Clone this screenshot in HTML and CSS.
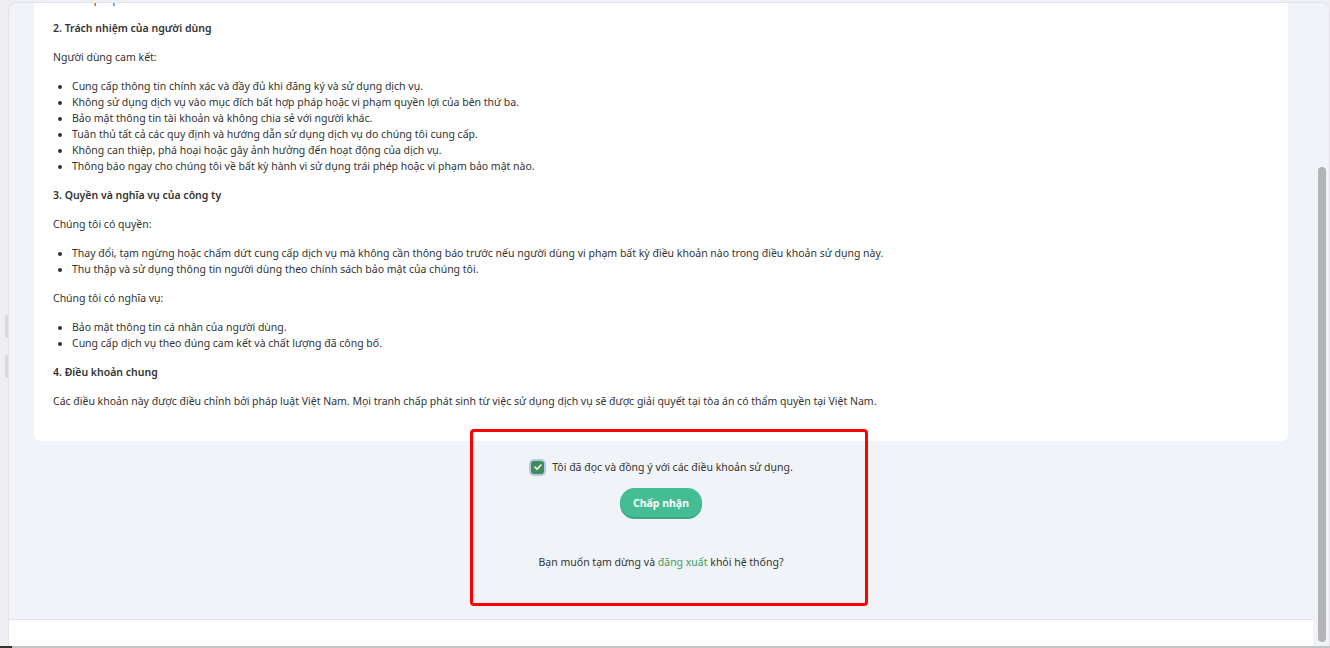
FILE: index.html
```html
<!DOCTYPE html>
<html lang="vi">
<head>
<meta charset="utf-8">
<title>Điều khoản sử dụng</title>
<link rel="stylesheet" href="styles.css">
</head>
<body>
<div class="frame">
  <div class="gutter">
    <span class="handle"></span>
    <span class="handle"></span>
  </div>
  <div class="panel">
    <div class="main">
      <div class="viewport">
        <article class="card">
          <ul class="list">
            <li>Giải pháp thanh toán</li>
          </ul>
          <h3 class="heading">2. Trách nhiệm của người dùng</h3>
          <p class="para">Người dùng cam kết:</p>
          <ul class="list">
            <li>Cung cấp thông tin chính xác và đầy đủ khi đăng ký và sử dụng dịch vụ.</li>
            <li>Không sử dụng dịch vụ vào mục đích bất hợp pháp hoặc vi phạm quyền lợi của bên thứ ba.</li>
            <li>Bảo mật thông tin tài khoản và không chia sẻ với người khác.</li>
            <li>Tuân thủ tất cả các quy định và hướng dẫn sử dụng dịch vụ do chúng tôi cung cấp.</li>
            <li>Không can thiệp, phá hoại hoặc gây ảnh hưởng đến hoạt động của dịch vụ.</li>
            <li>Thông báo ngay cho chúng tôi về bất kỳ hành vi sử dụng trái phép hoặc vi phạm bảo mật nào.</li>
          </ul>
          <h3 class="heading">3. Quyền và nghĩa vụ của công ty</h3>
          <p class="para">Chúng tôi có quyền:</p>
          <ul class="list">
            <li>Thay đổi, tạm ngừng hoặc chấm dứt cung cấp dịch vụ mà không cần thông báo trước nếu người dùng vi phạm bất kỳ điều khoản nào trong điều khoản sử dụng này.</li>
            <li>Thu thập và sử dụng thông tin người dùng theo chính sách bảo mật của chúng tôi.</li>
          </ul>
          <p class="para">Chúng tôi có nghĩa vụ:</p>
          <ul class="list">
            <li>Bảo mật thông tin cá nhân của người dùng.</li>
            <li>Cung cấp dịch vụ theo đúng cam kết và chất lượng đã công bố.</li>
          </ul>
          <h3 class="heading">4. Điều khoản chung</h3>
          <p class="para">Các điều khoản này được điều chỉnh bởi pháp luật Việt Nam. Mọi tranh chấp phát sinh từ việc sử dụng dịch vụ sẽ được giải quyết tại tòa án có thẩm quyền tại Việt Nam.</p>
        </article>
        <section class="agree">
          <label class="check-row">
            <span class="checkbox">
              <svg viewBox="0 0 12 12" width="12" height="12" aria-hidden="true"><path d="M3 6.2 L5.1 8.2 L9 4" fill="none" stroke="#ffffff" stroke-width="1.6" stroke-linecap="round" stroke-linejoin="round"/></svg>
            </span>
            <span class="check-text">Tôi đã đọc và đồng ý với các điều khoản sử dụng.</span>
          </label>
          <button class="accept" type="button">Chấp nhận</button>
          <p class="logout">Bạn muốn tạm dừng và <a class="logout-link" href="#">đăng xuất</a> khỏi hệ thống?</p>
        </section>
      </div>
      <footer class="footer"></footer>
    </div>
    <div class="scrollbar"><span class="thumb"></span></div>
  </div>
</div>
<div class="taskbar"></div>
<div class="annotation"></div>
</body>
</html>
```

FILE: styles.css
```css
html, body {
  margin: 0;
  padding: 0;
}
body {
  width: 1330px;
  height: 648px;
  overflow: hidden;
  background: #efeff3;
  font-family: "Noto Sans", "Open Sans", sans-serif;
  font-size: 10.5px;
  color: #333333;
  position: relative;
}
.frame {
  display: flex;
  height: 644px;
  padding-top: 2px;
}
.gutter {
  width: 8px;
  flex: none;
  display: flex;
  flex-direction: column;
  align-items: flex-end;
  gap: 17px;
  padding-top: 313px;
  box-sizing: border-box;
}
.handle {
  display: block;
  width: 3px;
  height: 23px;
  background: #d9d9de;
  border-radius: 2px 0 0 2px;
}
.panel {
  flex: 1;
  display: flex;
  background: #f0f3f8;
  border: 1px solid #e2e2e8;
  border-bottom: none;
  border-radius: 9px 9px 0 0;
  overflow: hidden;
}
.main {
  flex: 1;
  display: flex;
  flex-direction: column;
  min-width: 0;
}
.viewport {
  flex: 1;
  display: flex;
  flex-direction: column;
  padding: 0 27px 0 25px;
  min-height: 0;
}
.card {
  background: #ffffff;
  margin-top: -12px;
  padding: 0 19px 19px;
  border-radius: 0 0 6px 6px;
  line-height: 16px;
}
.card > :first-child {
  margin-top: 0;
}
.heading {
  font-size: 10.5px;
  font-weight: 600;
  margin: 13px 0;
  line-height: 16px;
}
.para {
  margin: 13px 0;
}
.list {
  margin: 13px 0;
  padding-left: 19px;
}
.list li {
  line-height: 16px;
}
.agree {
  display: flex;
  flex-direction: column;
  align-items: center;
  padding-top: 17px;
}
.check-row {
  display: flex;
  align-items: center;
  gap: 6px;
  height: 18px;
}
.checkbox {
  width: 13px;
  height: 13px;
  background: #3f8b5a;
  border-radius: 3px;
  box-shadow: 0 0 0 2px #b3c9e6;
  display: flex;
  align-items: center;
  justify-content: center;
  margin: 0 2px;
}
.check-text {
  line-height: 16px;
}
.accept {
  margin-top: 12px;
  height: 29px;
  padding: 0 13px;
  border: none;
  border-radius: 15px;
  background: #44bc94;
  color: #ffffff;
  font-family: "Noto Sans", "Open Sans", sans-serif;
  font-size: 10.5px;
  font-weight: 700;
  box-shadow: 0 2px 0 #3aa683;
}
.logout {
  margin: 37px 0 0;
  line-height: 16px;
}
.logout-link {
  color: #3e9c5c;
  text-decoration: none;
}
.footer {
  height: 26px;
  flex: none;
  background: #ffffff;
  border-top: 1px solid #e1e1e4;
  margin-right: 2px;
}
.scrollbar {
  width: 14px;
  flex: none;
  padding-top: 164px;
  box-sizing: border-box;
}
.thumb {
  display: block;
  width: 8px;
  height: 475px;
  margin-left: 3px;
  background: #b4b4b4;
  border-radius: 4px;
}
.taskbar {
  height: 2px;
  background: linear-gradient(to right, #35352c 0, #35352c 12px, #c4c4c4 12px, #c4c4c4 100%);
}
.annotation {
  position: absolute;
  left: 470px;
  top: 429px;
  width: 392px;
  height: 171px;
  border: 3px solid #ff0000;
  border-radius: 4px;
  pointer-events: none;
}
```
